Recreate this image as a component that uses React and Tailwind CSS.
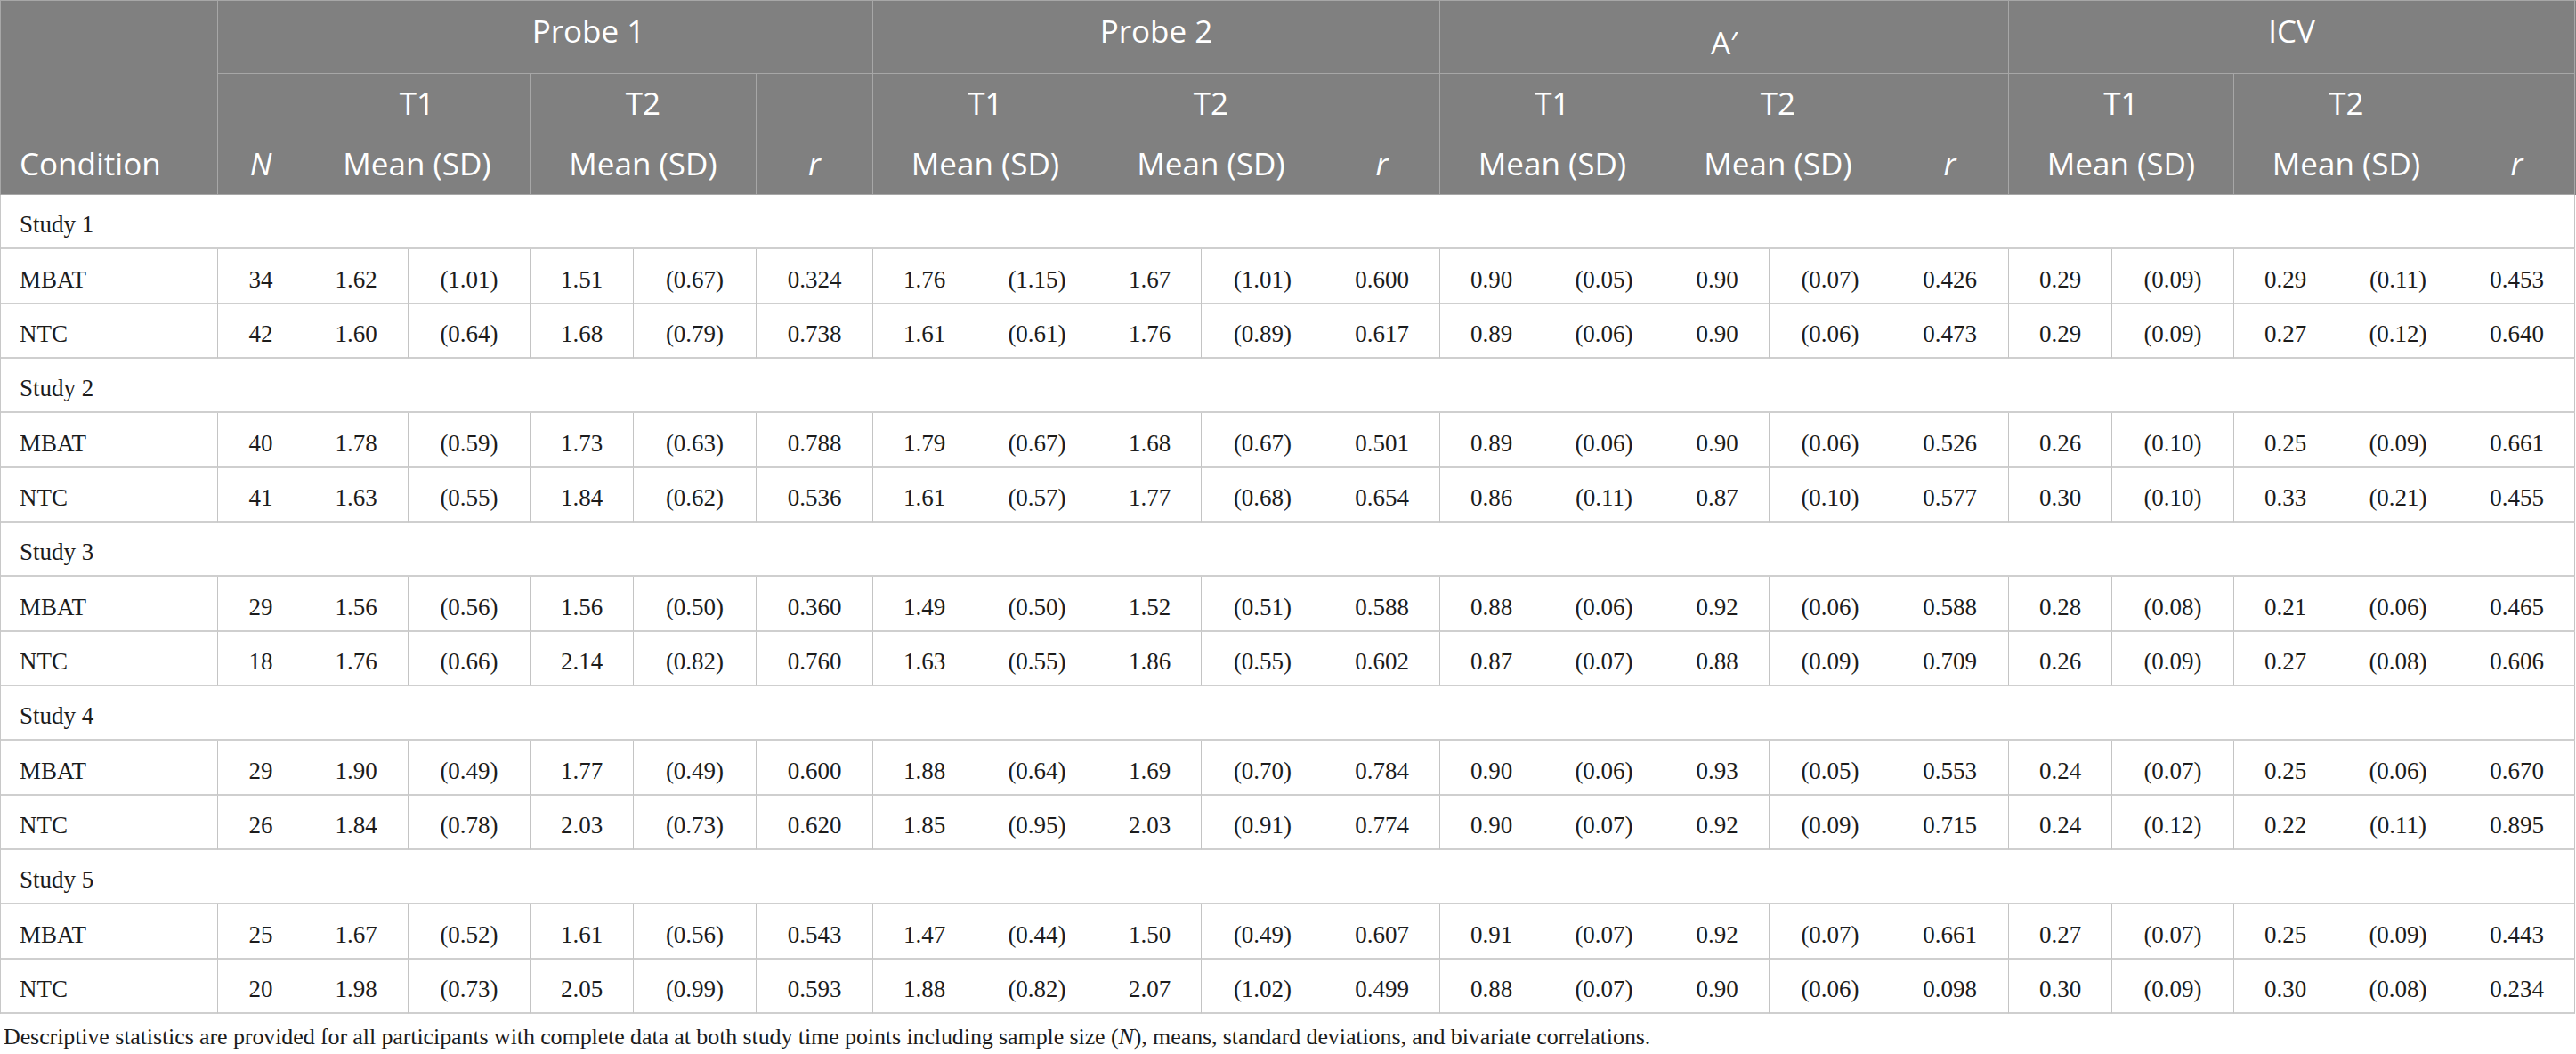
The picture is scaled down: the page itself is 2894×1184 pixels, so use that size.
import React from "react";

const hc =
  "flex items-center justify-center border-r border-b border-[#a7a7a7] text-white";

const bc =
  "flex items-center justify-center border-r border-b-2 border-r-[#c4c4c4] border-b-[#cfcfcf] pt-2";

const studies = [
  {
    name: "Study 1",
    rows: [
      ["MBAT", "34", "1.62", "(1.01)", "1.51", "(0.67)", "0.324", "1.76", "(1.15)", "1.67", "(1.01)", "0.600", "0.90", "(0.05)", "0.90", "(0.07)", "0.426", "0.29", "(0.09)", "0.29", "(0.11)", "0.453"],
      ["NTC", "42", "1.60", "(0.64)", "1.68", "(0.79)", "0.738", "1.61", "(0.61)", "1.76", "(0.89)", "0.617", "0.89", "(0.06)", "0.90", "(0.06)", "0.473", "0.29", "(0.09)", "0.27", "(0.12)", "0.640"]
    ]
  },
  {
    name: "Study 2",
    rows: [
      ["MBAT", "40", "1.78", "(0.59)", "1.73", "(0.63)", "0.788", "1.79", "(0.67)", "1.68", "(0.67)", "0.501", "0.89", "(0.06)", "0.90", "(0.06)", "0.526", "0.26", "(0.10)", "0.25", "(0.09)", "0.661"],
      ["NTC", "41", "1.63", "(0.55)", "1.84", "(0.62)", "0.536", "1.61", "(0.57)", "1.77", "(0.68)", "0.654", "0.86", "(0.11)", "0.87", "(0.10)", "0.577", "0.30", "(0.10)", "0.33", "(0.21)", "0.455"]
    ]
  },
  {
    name: "Study 3",
    rows: [
      ["MBAT", "29", "1.56", "(0.56)", "1.56", "(0.50)", "0.360", "1.49", "(0.50)", "1.52", "(0.51)", "0.588", "0.88", "(0.06)", "0.92", "(0.06)", "0.588", "0.28", "(0.08)", "0.21", "(0.06)", "0.465"],
      ["NTC", "18", "1.76", "(0.66)", "2.14", "(0.82)", "0.760", "1.63", "(0.55)", "1.86", "(0.55)", "0.602", "0.87", "(0.07)", "0.88", "(0.09)", "0.709", "0.26", "(0.09)", "0.27", "(0.08)", "0.606"]
    ]
  },
  {
    name: "Study 4",
    rows: [
      ["MBAT", "29", "1.90", "(0.49)", "1.77", "(0.49)", "0.600", "1.88", "(0.64)", "1.69", "(0.70)", "0.784", "0.90", "(0.06)", "0.93", "(0.05)", "0.553", "0.24", "(0.07)", "0.25", "(0.06)", "0.670"],
      ["NTC", "26", "1.84", "(0.78)", "2.03", "(0.73)", "0.620", "1.85", "(0.95)", "2.03", "(0.91)", "0.774", "0.90", "(0.07)", "0.92", "(0.09)", "0.715", "0.24", "(0.12)", "0.22", "(0.11)", "0.895"]
    ]
  },
  {
    name: "Study 5",
    rows: [
      ["MBAT", "25", "1.67", "(0.52)", "1.61", "(0.56)", "0.543", "1.47", "(0.44)", "1.50", "(0.49)", "0.607", "0.91", "(0.07)", "0.92", "(0.07)", "0.661", "0.27", "(0.07)", "0.25", "(0.09)", "0.443"],
      ["NTC", "20", "1.98", "(0.73)", "2.05", "(0.99)", "0.593", "1.88", "(0.82)", "2.07", "(1.02)", "0.499", "0.88", "(0.07)", "0.90", "(0.06)", "0.098", "0.30", "(0.09)", "0.30", "(0.08)", "0.234"]
    ]
  }
];

const groups = ["Probe 1", "Probe 2", "A\u2032", "ICV"];

export default function App() {
  return (
    <div className="min-h-screen bg-white">

      {/* HEADER */}

      <div className="grid grid-cols-[244px_97px_117px_137px_116px_138px_131px_116px_137px_116px_138px_130px_116px_137px_117px_137px_132px_116px_137px_116px_137px_130px] grid-rows-[82px_68px_68px] bg-[#808080] border-t border-l border-[#a7a7a7] font-[Open_Sans,sans-serif] text-[35px]">
        <div className={`${hc} row-span-2`}></div>
        <div className={hc}></div>

        {groups.map((g) => (
          <div
            key={g}
            className={`${hc} col-span-5 ${g === "A\u2032" ? "pt-[14px]" : "pb-3"}`}
          >
            {g}
          </div>
        ))}

        <div className={hc}></div>

        {groups.map((g) => (
          <React.Fragment key={g + "-t"}>
            <div className={`${hc} col-span-2`}>T1</div>
            <div className={`${hc} col-span-2`}>T2</div>
            <div className={hc}></div>
          </React.Fragment>
        ))}

        <div className={`${hc} justify-start pl-[21px]`}>Condition</div>
        <div className={`${hc} italic`}>N</div>

        {groups.map((g) => (
          <React.Fragment key={g + "-m"}>
            <div className={`${hc} col-span-2`}>Mean (SD)</div>
            <div className={`${hc} col-span-2`}>Mean (SD)</div>
            <div className={`${hc} italic`}>r</div>
          </React.Fragment>
        ))}
      </div>

      {/* BODY */}

      <div className="grid grid-cols-[244px_97px_117px_137px_116px_138px_131px_116px_137px_116px_138px_130px_116px_137px_117px_137px_132px_116px_137px_116px_137px_130px] border-l border-[#c8c8c8] font-[Liberation_Serif,serif] text-[27px] text-[#1c1c1c]">
        {studies.map((s) => (
          <React.Fragment key={s.name}>
            <div className={`${bc} col-span-22 h-[61px] justify-start pl-[21px]`}>
              {s.name}
            </div>

            {s.rows.map((row, ri) => (
              <React.Fragment key={s.name + row[0]}>
                {row.map((cell, ci) => (
                  <div
                    key={ci}
                    className={`${bc} ${ri === 0 ? "h-[62px]" : "h-[61px]"} ${ci === 0 ? "justify-start pl-[21px]" : ""}`}
                  >
                    {cell}
                  </div>
                ))}
              </React.Fragment>
            ))}
          </React.Fragment>
        ))}
      </div>

      {/* CAPTION */}

      <p className="mt-[11px] pl-1 font-[Liberation_Serif,serif] text-[26px] tracking-[-0.1px] leading-[30px] text-[#1c1c1c]">
        Descriptive statistics are provided for all participants with complete data at both study time points including sample size (<i>N</i>), means, standard deviations, and bivariate correlations.
      </p>

    </div>
  );
}
